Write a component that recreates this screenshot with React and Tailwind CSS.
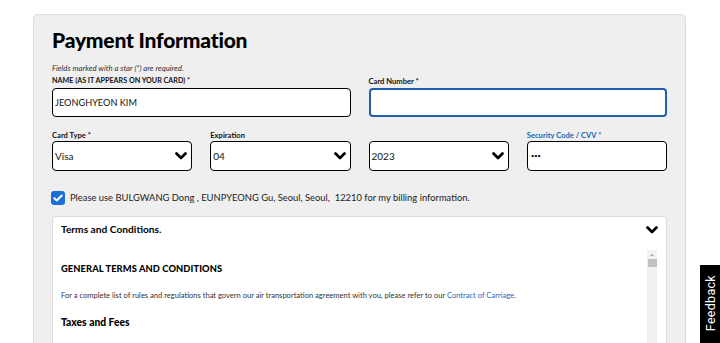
import React from "react";

function Chevron() {
  return (
    <svg width="12" height="8" viewBox="0 0 12 8" className="shrink-0">
      <path d="M1.5 1.5 L6 6 L10.5 1.5" fill="none" stroke="#000" strokeWidth="2.7" strokeLinecap="round" strokeLinejoin="round" />
    </svg>
  );
}

function Select({ value }) {
  return (
    <div className="h-[30px] border border-black rounded-[4px] bg-white flex items-center justify-between pl-[2px] pr-[4px]">
      <span className="text-[10px] text-[#111]">{value}</span>
      <Chevron />
    </div>
  );
}

export default function App() {
  return (
    <div className="w-[720px] h-[343px] overflow-hidden bg-white relative font-['Lato',sans-serif] text-[#111]">
      <div className="ml-[33px] mt-[14px] w-[653px] h-[400px] border border-[#dadada] rounded-[5px] bg-[#efefef] px-[18px] pt-[11px]">
        <h1 className="text-[21px] leading-[28px] font-black text-black tracking-[-0.2px]">Payment Information</h1>
        <p className="text-[7.8px] italic text-[#333] leading-[10px] mt-[9px]">Fields marked with a star (*) are required.</p>
        <div className="grid grid-cols-4 gap-x-[18px]">
          <div className="col-span-2">
            <div className="text-[7.2px] font-bold leading-[10px] mt-[3px] mb-[2px]">NAME (AS IT APPEARS ON YOUR CARD) *</div>
            <div className="h-[29px] border border-black rounded-[4px] bg-white flex items-center px-[2px] text-[9.2px]">JEONGHYEON KIM</div>
          </div>
          <div className="col-span-2">
            <div className="text-[7.6px] font-bold leading-[10px] mt-[3px] mb-[2px]">Card Number *</div>
            <div className="h-[29px] border-2 border-[#1f5fb0] rounded-[4px] bg-white"></div>
          </div>
          <div className="mt-[13px]">
            <div className="text-[7.6px] font-bold leading-[10px] mb-[1px]">Card Type *</div>
            <Select value="Visa" />
          </div>
          <div className="mt-[13px]">
            <div className="text-[7.6px] font-bold leading-[10px] mb-[1px]">Expiration</div>
            <Select value="04" />
          </div>
          <div className="mt-[13px]">
            <div className="text-[7.6px] font-bold leading-[10px] mb-[1px]">&nbsp;</div>
            <Select value="2023" />
          </div>
          <div className="mt-[13px]">
            <div className="text-[7.6px] font-bold leading-[10px] mb-[1px] text-[#1f5fb0]">Security Code / CVV *</div>
            <div className="h-[30px] border border-black rounded-[4px] bg-white flex items-center px-[3px] text-[6.5px] leading-none tracking-[-0.5px]">•••</div>
          </div>
        </div>
        <div className="flex items-center mt-[20px] ml-[-1px]">
          <div className="w-[14px] h-[14px] rounded-[3px] bg-[#1d6fd6] flex items-center justify-center">
            <svg width="10" height="8" viewBox="0 0 10 8">
              <path d="M1.3 4.2 L3.8 6.5 L8.7 1.5" fill="none" stroke="#fff" strokeWidth="1.9" strokeLinecap="round" strokeLinejoin="round" />
            </svg>
          </div>
          <span className="ml-[5px] text-[9.4px] text-[#222]">Please use BULGWANG Dong , EUNPYEONG Gu, Seoul, Seoul,&nbsp; 12210 for my billing information.</span>
        </div>
        <div className="mt-[11px] bg-white border border-[#dcdcdc] rounded-t-[3px] h-[200px]">
          <div className="flex items-center justify-between h-[25px] pl-[8px] pr-[8px] pt-[1px]">
            <span className="text-[10.2px] font-bold text-black">Terms and Conditions.</span>
            <Chevron />
          </div>
          <div className="flex pt-[8px]">
            <div className="flex-1 pl-[8px]">
              <div className="text-[9.3px] font-black text-black mt-[12px] tracking-[0.1px]">GENERAL TERMS AND CONDITIONS</div>
              <div className="text-[7.55px] text-[#333] mt-[14px]">
                For a complete list of rules and regulations that govern our air transportation agreement with you, please refer to our <span className="text-[#1f66c1]">Contract of Carriage</span>.
              </div>
              <div className="text-[10.3px] font-black text-black mt-[14px]">Taxes and Fees</div>
            </div>
            <div className="w-[10px] mr-[9px] bg-[#f1f1f1] h-[100px] flex flex-col items-center">
              <svg width="6" height="6" viewBox="0 0 6 6" className="mt-[2px]">
                <path d="M1 4 L3 2 L5 4 Z" fill="#a3a3a3" />
              </svg>
              <div className="w-[9px] h-[8px] bg-[#c1c1c1] mt-[1px]"></div>
            </div>
          </div>
        </div>
      </div>
      <div className="absolute left-[700px] top-[265px] w-[22px] h-[90px] bg-black flex items-start justify-center">
        <span className="block text-white text-[12.5px] font-['Roboto',sans-serif] whitespace-nowrap [writing-mode:vertical-rl] rotate-180 mt-[10px] tracking-[0.3px]">Feedback</span>
      </div>
    </div>
  );
}
